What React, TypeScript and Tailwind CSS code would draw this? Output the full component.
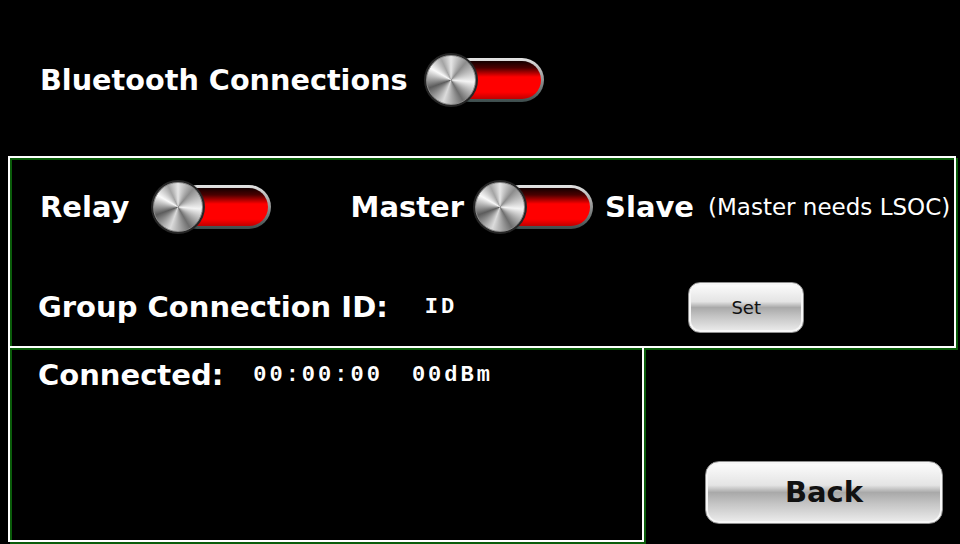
import React from "react";

function Toggle() {
  return (
    <div className="relative w-[120px] h-[54px] shrink-0">
      <div className="absolute left-[24px] right-0 top-[5px] h-[44px] rounded-full p-[3px] bg-[linear-gradient(to_bottom,#e4e4e4,#9a9a9a_45%,#3c4c4c)]">
        <div className="h-full w-full rounded-full bg-[linear-gradient(to_bottom,#140000_0%,#4a0000_18%,#ff0000_42%,#ff0000_82%,#c00000_100%)]" />
      </div>
      <div className="absolute left-0 top-0 w-[54px] h-[54px] rounded-full p-[2px] bg-[#262626]">
        <div className="w-full h-full rounded-full border border-[#8a8a8a] bg-[conic-gradient(from_0deg,#e6e6e6,#8c8c8c_40deg,#f4f4f4_95deg,#6e6e6e_150deg,#dcdcdc_200deg,#5c5c5c_250deg,#fafafa_300deg,#a4a4a4_335deg,#e6e6e6)]" />
      </div>
    </div>
  );
}

function GlossButton({ label, className }: { label: string; className: string }) {
  return (
    <button
      className={
        "flex items-center justify-center border border-[#8e8e8e] shadow-[inset_0_0_0_2px_#f6f6f6] bg-[linear-gradient(to_bottom,#fdfdfd_0%,#e4e4e4_38%,#a9a9a9_50%,#c4c4c4_68%,#eeeeee_100%)] text-[#111] " +
        className
      }
    >
      {label}
    </button>
  );
}

export default function App() {
  return (
    <div className="w-[960px] h-[544px] bg-black text-white overflow-hidden font-['DejaVu_Sans',sans-serif]">
      {/* header */}
      <div className="h-[156px] pl-[40px] pt-[53px]">
        <div className="flex items-center gap-[16px]">
          <span className="text-[28.7px] font-bold leading-none">Bluetooth Connections</span>
          <Toggle />
        </div>
      </div>

      {/* settings panel */}
      <div className="ml-[8px] w-[948px] h-[192px] border-2 border-white shadow-[inset_2px_2px_0_#0a5c0a,2px_2px_0_#0a5c0a]">
        <div className="flex items-center h-[54px] mt-[22px] pl-[30px]">
          <span className="text-[29px] font-bold leading-none">Relay</span>
          <div className="ml-[21px]">
            <Toggle />
          </div>
          <span className="ml-[80px] text-[29px] font-bold leading-none">Master</span>
          <div className="ml-[9px]">
            <Toggle />
          </div>
          <span className="ml-[12px] text-[29px] font-bold leading-none">Slave</span>
          <span className="ml-[14px] text-[23px] leading-none">(Master needs LSOC)</span>
        </div>
        <div className="flex items-center h-[51px] mt-[48px] pl-[28px]">
          <span className="text-[29px] font-bold leading-none">Group Connection ID:</span>
          <span className="ml-[37px] font-['Liberation_Mono',monospace] font-bold text-[22px] tracking-[3px]">ID</span>
          <GlossButton label="Set" className="ml-[231px] w-[116px] h-[51px] rounded-[12px] text-[18px]" />
        </div>
      </div>

      {/* bottom */}
      <div className="flex">
        <div className="ml-[8px] w-[636px] h-[194px] border-2 border-t-0 border-white shadow-[inset_2px_2px_0_#0a5c0a,2px_2px_0_#0a5c0a] pl-[28px] pt-[10px]">
          <div className="flex items-center">
            <span className="text-[29px] font-bold leading-[34px]">Connected:</span>
            <span className="ml-[30px] font-['Liberation_Mono',monospace] font-bold text-[22px] tracking-[3px]">00:00:00</span>
            <span className="ml-[29px] font-['Liberation_Mono',monospace] font-bold text-[22px] tracking-[3px]">00dBm</span>
          </div>
        </div>
        <div className="pl-[61px] pt-[113px]">
          <GlossButton label="Back" className="w-[238px] h-[63px] rounded-[14px] text-[29px] font-bold" />
        </div>
      </div>
    </div>
  );
}
